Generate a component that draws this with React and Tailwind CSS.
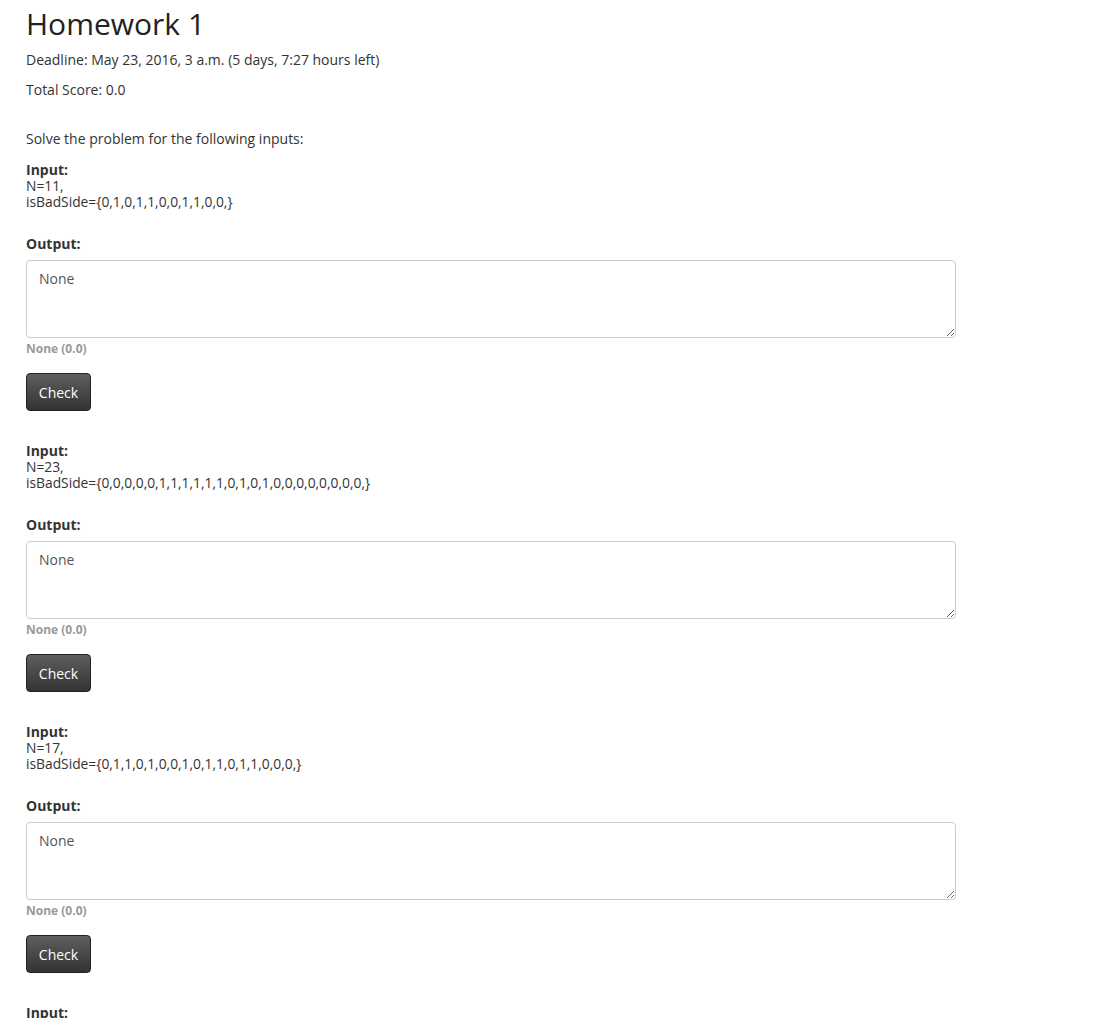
import React from "react";

const problems = [
  { n: 11, bad: "{0,1,0,1,1,0,0,1,1,0,0,}" },
  { n: 23, bad: "{0,0,0,0,0,1,1,1,1,1,1,0,1,0,1,0,0,0,0,0,0,0,0,}" },
  { n: 17, bad: "{0,1,1,0,1,0,0,1,0,1,1,0,1,1,0,0,0,}" },
  { n: 9, bad: "{0,1,0,0,1,1,0,1,0,}" },
];

function ProblemBlock({ n, bad }) {
  return (
    <div className="mb-[32px]">
      <div className="text-[14px] leading-[16px] font-bold">Input:</div>
      <div className="text-[13.8px] leading-[16px]">N={n},</div>
      <div className="text-[13.8px] leading-[16px]">isBadSide={bad}</div>

      <div className="mt-[26px] text-[14px] leading-[16px] font-bold">Output:</div>
      <textarea
        readOnly
        defaultValue="None"
        className="mt-[8px] block w-[930px] h-[78px] rounded-[4px] border border-[#cccccc] px-[12px] py-[8px] text-[14px] leading-[20px] text-[#555555] outline-none"
      />
      <div className="mt-[3px] text-[12px] leading-[16px] font-bold text-[#999999]">None (0.0)</div>

      <button className="mt-[16px] block w-[65px] h-[38px] rounded-[4px] border border-[#222222] bg-gradient-to-b from-[#5f5f5f] to-[#333333] text-[14px] text-white">
        Check
      </button>
    </div>
  );
}

export default function App() {
  return (
    <div className="min-h-screen bg-white px-[26px] pt-[4px] text-[#333333] font-['Open_Sans',sans-serif]">
      <h1 className="text-[30px] leading-[40px] font-normal text-[#222222]">Homework 1</h1>
      <p className="mt-[8px] text-[14px] leading-[16px]">
        Deadline: May 23, 2016, 3 a.m. (5 days, 7:27 hours left)
      </p>
      <p className="mt-[14px] text-[14px] leading-[16px]">Total Score: 0.0</p>

      <p className="mt-[33px] text-[14px] leading-[16px]">Solve the problem for the following inputs:</p>

      <div className="mt-[15px]">
        {problems.map((p, i) => (
          <ProblemBlock key={i} n={p.n} bad={p.bad} />
        ))}
      </div>
    </div>
  );
}
